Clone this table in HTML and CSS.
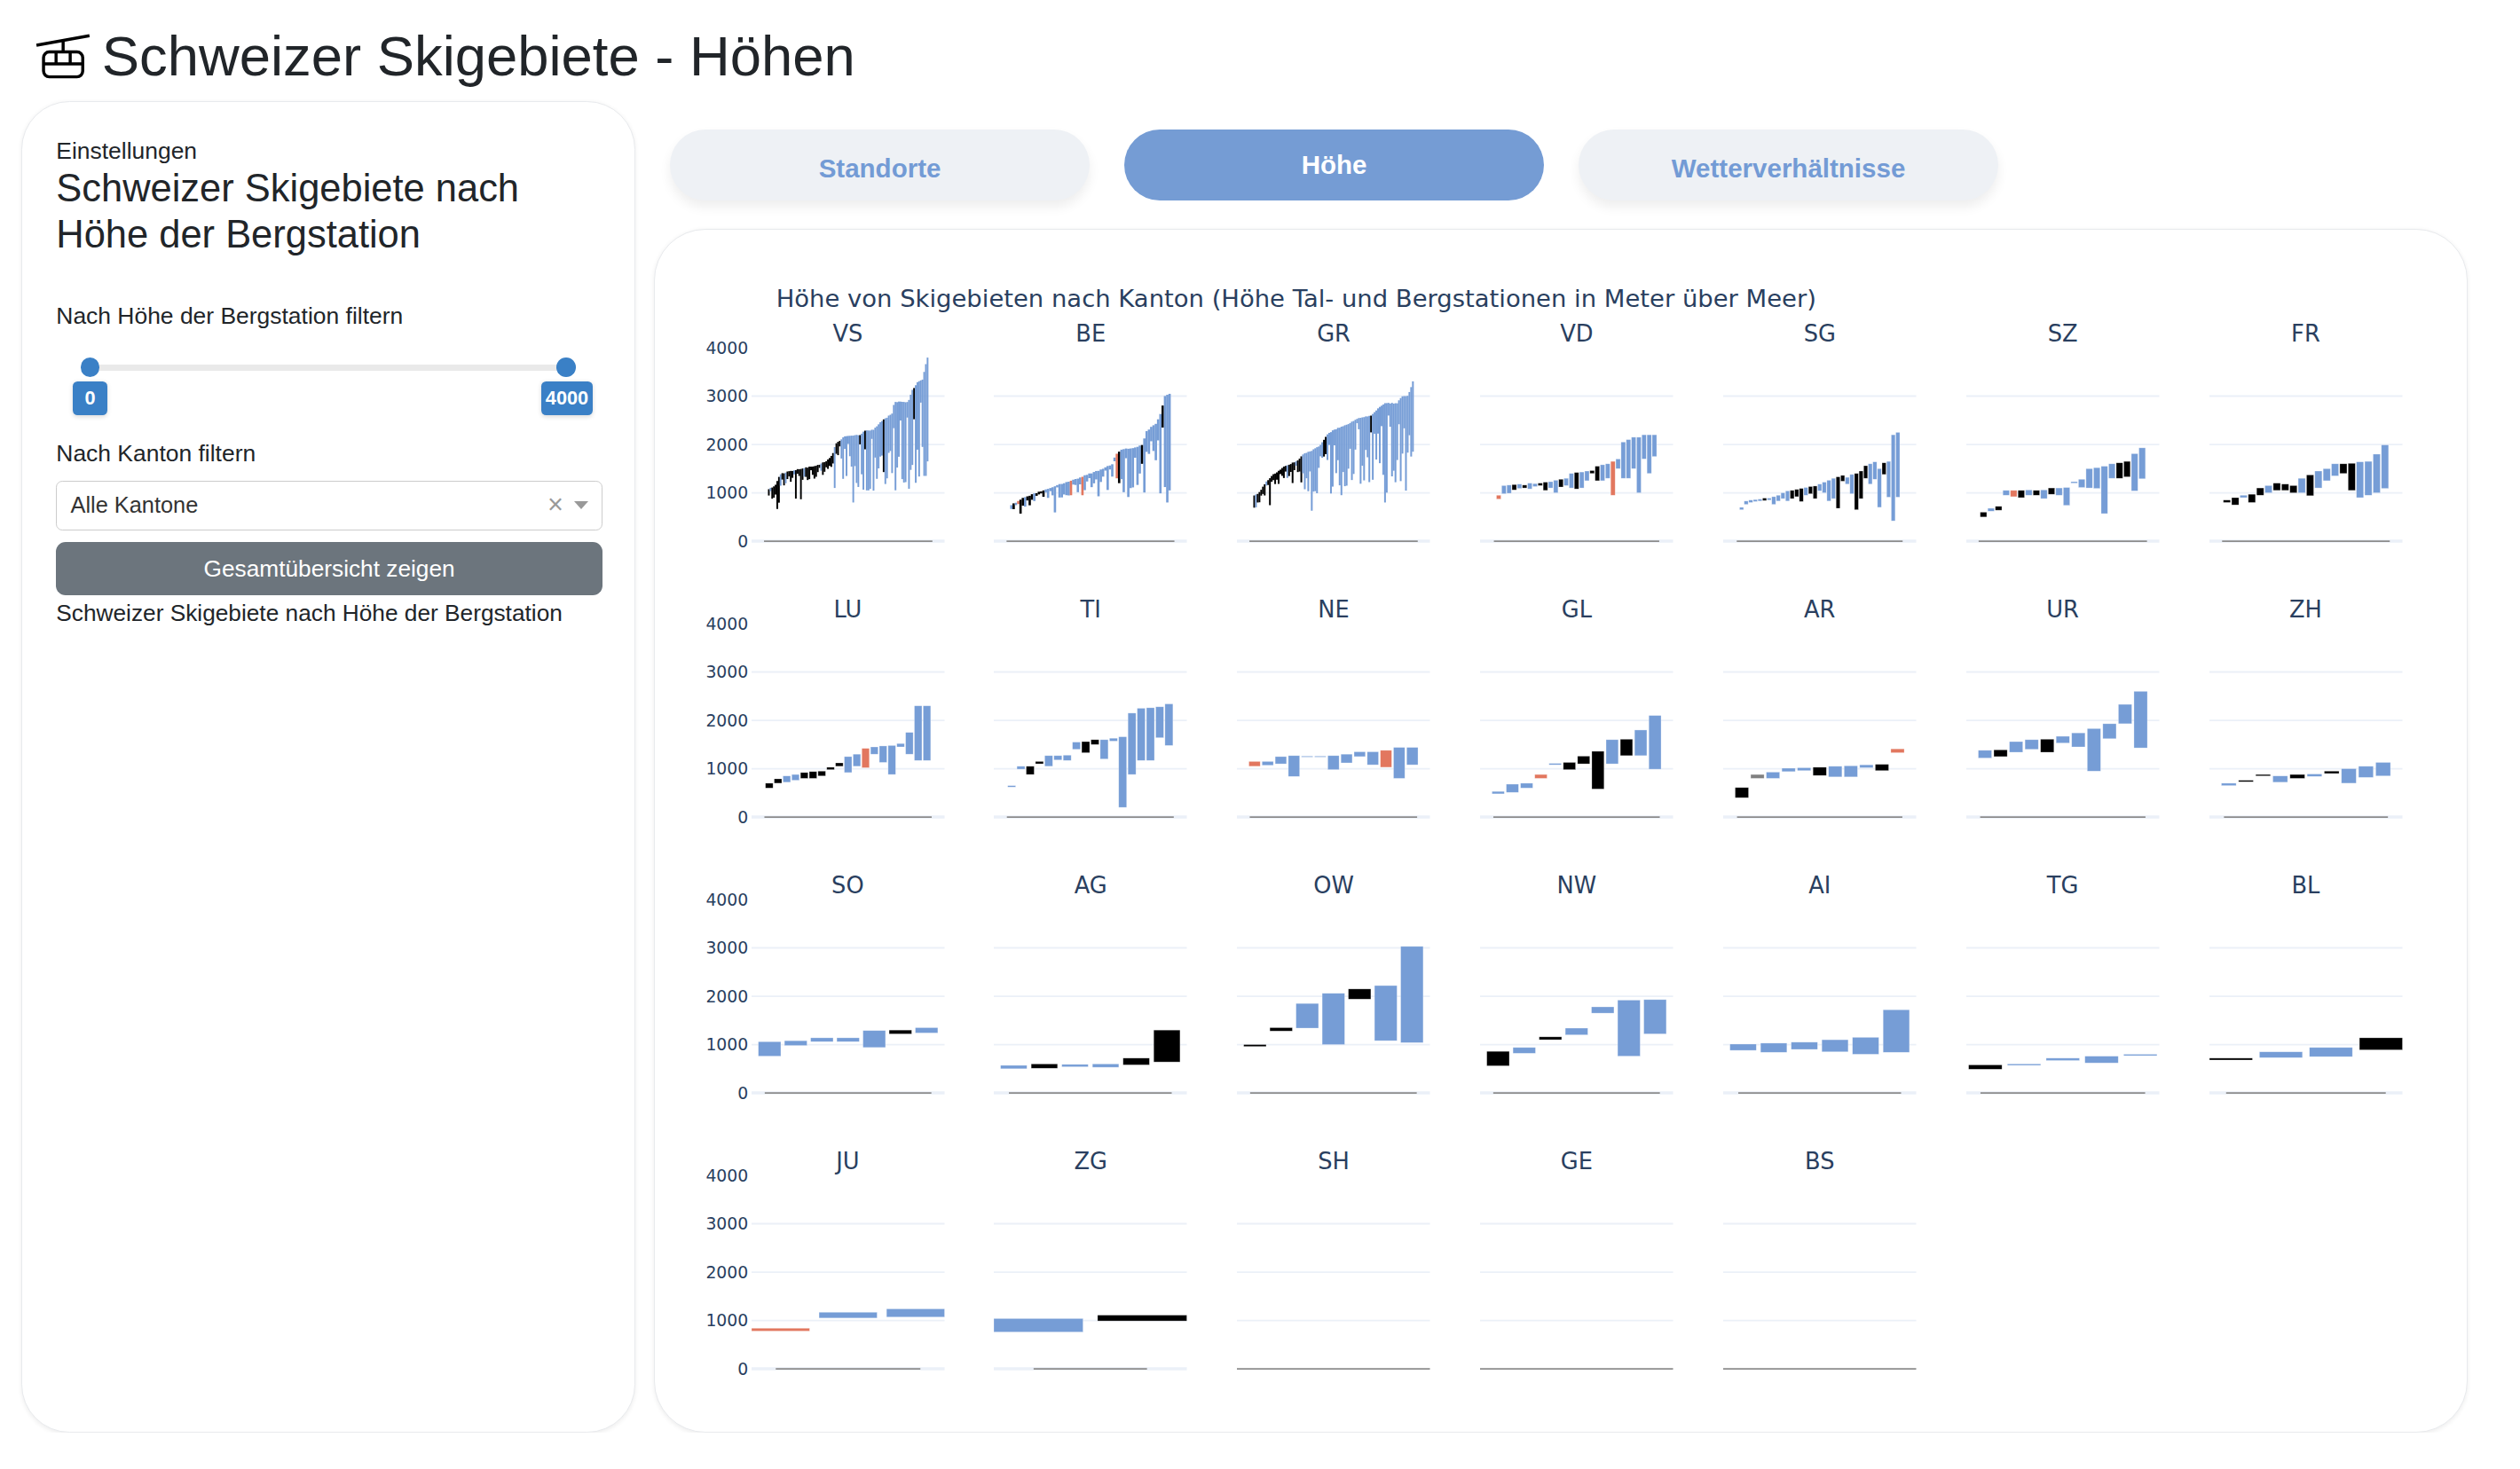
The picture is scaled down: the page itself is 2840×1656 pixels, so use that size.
FILE: index.html
```html
<!DOCTYPE html>
<html lang="de">
<head>
<meta charset="utf-8">
<title>Schweizer Skigebiete - Höhen</title>
<link rel="stylesheet" href="styles.css">
</head>
<body>
<header class="page-header">
  <svg class="logo" width="34" height="29" viewBox="0 0 34 29" aria-hidden="true">
    <g fill="none" stroke="#000" stroke-width="1.9">
      <line x1="0.6" y1="7.7" x2="33.6" y2="1.8"/>
      <line x1="17.2" y1="4.5" x2="17.2" y2="11.9"/>
      <rect x="5" y="11.9" width="24.4" height="15.5" rx="3.6"/>
      <line x1="5" y1="19.3" x2="29.4" y2="19.3"/>
      <line x1="12.8" y1="11.9" x2="12.8" y2="19.3"/>
      <line x1="21.6" y1="11.9" x2="21.6" y2="19.3"/>
    </g>
  </svg>
  <h1>Schweizer Skigebiete - Höhen</h1>
</header>
<main class="layout">
  <aside class="card settings">
    <div class="eyebrow">Einstellungen</div>
    <h2>Schweizer Skigebiete nach Höhe der Bergstation</h2>
    <div class="field-label first">Nach Höhe der Bergstation filtern</div>
    <div class="range">
      <div class="track"></div>
      <span class="handle h-min"></span>
      <span class="handle h-max"></span>
      <span class="tip t-min">0</span>
      <span class="tip t-max">4000</span>
    </div>
    <div class="field-label">Nach Kanton filtern</div>
    <div class="select">
      <span class="select-value">Alle Kantone</span>
      <span class="select-clear">×</span>
      <span class="select-caret"></span>
    </div>
    <button class="btn-overview" type="button">Gesamtübersicht zeigen</button>
    <p class="caption">Schweizer Skigebiete nach Höhe der Bergstation</p>
  </aside>
  <section class="content">
    <nav class="tabs">
      <button class="tab" type="button">Standorte</button>
      <button class="tab active" type="button">Höhe</button>
      <button class="tab" type="button">Wetterverhältnisse</button>
    </nav>
    <div class="card chart">
      <div class="fig-title">Höhe von Skigebieten nach Kanton (Höhe Tal- und Bergstationen in Meter über Meer)</div>
      <div id="fig" class="fig"></div>
    </div>
  </section>
</main>
<script src="script.js"></script>
</body>
</html>
```

FILE: styles.css
```css
html { zoom: 1.81122; }
* { box-sizing: border-box; }
body {
  margin: 0;
  background: #fff;
  font-family: "Liberation Sans", Arial, sans-serif;
  color: #212529;
}
.page-header {
  display: flex;
  align-items: center;
  gap: 7.4px;
  height: 54.8px;
  padding: 14.8px 0 0 22px;
}
.logo { display: block; flex: none; }
.page-header h1 {
  margin: 0;
  font-size: 35px;
  line-height: 40px;
  font-weight: 400;
}
.layout {
  display: flex;
  align-items: flex-start;
  gap: 11.6px;
  padding: 8.2px 0 0 13.4px;
}
.card {
  background: #fff;
  border: 1px solid #e8eaed;
  border-radius: 30px;
  box-shadow: 0 1px 3px rgba(0, 0, 0, 0.07);
}
.settings {
  flex: none;
  width: 382px;
  height: 828.7px;
  padding: 22px 20px 21px 21px;
  font-size: 14.6px;
  line-height: 17px;
}
.eyebrow { height: 17px; }
.settings h2 {
  margin: 0;
  font-size: 24px;
  line-height: 29px;
  font-weight: 400;
}
.field-label { height: 17px; }
.field-label.first { margin-top: 27.5px; }
.range {
  position: relative;
  height: 69px;
  padding-top: 21.7px;
}
.track {
  margin-left: 20.6px;
  width: 297px;
  height: 4px;
  border-radius: 2px;
  background: #e9e9e9;
}
.handle {
  position: absolute;
  top: 17.7px;
  width: 12px;
  height: 12px;
  border-radius: 50%;
  background: #3a80c6;
}
.h-min { left: 15.1px; }
.h-max { left: 311.1px; }
.tip {
  position: absolute;
  top: 32.5px;
  height: 20.7px;
  border-radius: 3px;
  background: #3a80c6;
  color: #fff;
  font-size: 12px;
  font-weight: 700;
  line-height: 20.7px;
  text-align: center;
  box-shadow: 0 1px 3px rgba(0, 0, 0, 0.15);
}
.t-min { left: 10.4px; width: 21.4px; }
.t-max { left: 301.6px; width: 32.5px; }
.select {
  display: flex;
  align-items: center;
  margin-top: 8px;
  height: 31px;
  padding: 0 8.4px;
  border: 1px solid #ccc;
  border-radius: 4px;
  font-size: 14px;
  color: #333;
}
.select-value { flex: 1; }
.select-clear {
  width: 17px;
  text-align: center;
  font-size: 17px;
  color: #999;
}
.select-caret {
  margin-left: 3px;
  width: 0;
  height: 0;
  border-left: 4.5px solid transparent;
  border-right: 4.5px solid transparent;
  border-top: 5px solid #999;
}
.btn-overview {
  display: block;
  width: 100%;
  height: 33px;
  margin-top: 7.5px;
  border: 0;
  border-radius: 6px;
  background: #6c757d;
  color: #fff;
  font-family: inherit;
  font-size: 14.5px;
}
.caption {
  margin: 2.5px 0 0;
  font-size: 14.5px;
  line-height: 17px;
}
.content {
  flex: none;
  width: 1128.4px;
}
.tabs {
  display: flex;
  gap: 21.2px;
  padding: 17.6px 0 0 9.7px;
}
.tab {
  width: 261.5px;
  height: 44.2px;
  padding: 4.6px 0 0;
  border: 0;
  border-radius: 22.1px;
  background: #eef1f5;
  color: #739bd5;
  font-family: "Liberation Sans", Arial, sans-serif;
  font-size: 16.3px;
  font-weight: 700;
  box-shadow: 0 4px 7px rgba(0, 0, 0, 0.07);
}
.tab.active {
  padding-top: 0;
  background: #759cd4;
  color: #fff;
  box-shadow: none;
}
.chart {
  margin-top: 17.8px;
  height: 749.1px;
  padding-top: 34px;
  border-radius: 32px;
}
.fig-title {
  padding-left: 75.4px;
  font-family: "DejaVu Sans", Verdana, sans-serif;
  font-size: 15.15px;
  line-height: 18px;
  color: #2a3f5f;
}
.fig {
  display: flex;
  flex-direction: column;
  row-gap: 31.3px;
  margin-top: 1.5px;
  padding-left: 11.9px;
  font-family: "DejaVu Sans", Verdana, sans-serif;
  color: #2a3f5f;
}
.fig-row { display: flex; }
.yaxis {
  flex: none;
  width: 48px;
  padding-top: 20px;
}
.cells {
  display: grid;
  grid-template-columns: repeat(7, 120.1px);
  column-gap: 31.1px;
}
.cell-title {
  height: 20px;
  padding-top: 2px;
  line-height: 18px;
  font-size: 14.2px;
  text-align: center;
}
svg.plot, svg.yax { display: block; overflow: visible; }
.tick { font-family: "DejaVu Sans", Verdana, sans-serif; font-size: 10.4px; fill: #2a3f5f; }
.grid { stroke: #ebf0f8; stroke-width: 1; }
.zero-band { stroke: #ebf0f8; stroke-width: 2; }
.zero { stroke: #8c8c8c; stroke-width: 0.9; }
.bar { stroke: #fff; stroke-opacity: 0.45; stroke-width: 0.35; }
.bar.thin { stroke: none; }
```

FILE: script.js
```js
(function () {
  var NS = 'http://www.w3.org/2000/svg';
  var COLORS = { b: '#769dd6', k: '#000000', r: '#e2775f', g: '#808080' };
  var W = 120.1, H = 120.4, YMAX = 4000;

  function rng(seed) {
    var s = seed >>> 0;
    return function () { s = (Math.imul(s, 1664525) + 1013904223) >>> 0; return s / 4294967296; };
  }
  function interp(keys, t) {
    for (var i = 1; i < keys.length; i++) {
      if (t <= keys[i][0]) {
        var a = keys[i - 1], b = keys[i];
        return a[1] + (b[1] - a[1]) * (t - a[0]) / (b[0] - a[0]);
      }
    }
    return keys[keys.length - 1][1];
  }
  function dense(o) {
    var r = rng(o.seed), out = [];
    for (var i = 0; i < o.n; i++) {
      var t = i / (o.n - 1);
      var top = interp(o.keys, t) + (r() - 0.5) * 20;
      var bottom, c;
      if (t < o.split) {
        c = r() < o.early ? 'k' : 'b';
        bottom = top - (o.min + r() * o.span);
        if (r() < 0.06) bottom -= 350;
      } else {
        c = r() < o.late ? 'k' : 'b';
        var u = Math.pow(r(), o.pw);
        bottom = top - 60 - u * Math.max(0, top - o.base - 60);
      }
      out.push([Math.round(bottom), Math.round(top), c]);
    }
    (o.fix || []).forEach(function (f) {
      var d = out[f[0]];
      if (f[1] != null) d[0] = f[1];
      if (f[2]) d[2] = f[2];
    });
    return out;
  }

  var DATA = {
    VS: dense({ n: 95, seed: 11, split: 0.45, early: 0.75, min: 50, span: 230, late: 0.05, base: 1000, pw: 0.6,
      keys: [[0,1080],[0.04,1150],[0.07,1380],[0.12,1440],[0.2,1500],[0.3,1560],[0.36,1650],[0.4,1780],[0.42,2000],[0.46,2120],[0.48,2180],[0.58,2200],[0.6,2280],[0.66,2300],[0.7,2450],[0.78,2650],[0.79,2880],[0.88,2880],[0.9,3100],[0.94,3300],[0.97,3350],[0.985,3600],[1,3800]],
      fix: [[3,900],[16,880],[39,1100,'b'],[50,800],[57,1900,'k'],[58,1050],[59,1050],[92,1350],[93,1350],[94,1650]] }),
    BE: dense({ n: 70, seed: 5, split: 0.3, early: 0.45, min: 40, span: 160, late: 0.06, base: 900, pw: 1,
      keys: [[0,750],[0.08,900],[0.16,1000],[0.24,1100],[0.33,1200],[0.42,1300],[0.5,1400],[0.58,1500],[0.64,1600],[0.66,1800],[0.7,1900],[0.8,1950],[0.83,2000],[0.85,2250],[0.88,2350],[0.92,2450],[0.95,2700],[0.97,3000],[1,3050]],
      fix: [[3,null,'r'],[4,570],[10,830],[26,950,'r'],[31,950,'r'],[46,1300,'r'],[47,1200,'k'],[57,1600,'k'],[66,2350,'k'],[68,800],[69,1050]] }),
    GR: dense({ n: 92, seed: 3, split: 0.3, early: 0.8, min: 60, span: 220, late: 0.03, base: 950, pw: 0.8,
      keys: [[0,950],[0.03,1000],[0.07,1200],[0.11,1350],[0.15,1450],[0.19,1550],[0.27,1650],[0.31,1800],[0.38,1900],[0.42,2000],[0.46,2200],[0.5,2300],[0.58,2400],[0.66,2550],[0.74,2600],[0.78,2750],[0.82,2850],[0.9,2850],[0.93,3000],[0.97,3000],[1,3300]],
      fix: [[1,700],[2,800],[33,630],[40,1750,'k'],[41,1800,'k'],[67,2250,'k'],[75,800],[90,1750],[91,1850]] }),
    VD: [[870,950,'r'],[980,1150,'b'],[990,1160,'b'],[1060,1170,'k'],[1090,1180,'b'],[1100,1160,'k'],[1080,1200,'b'],[1130,1190,'b'],[1150,1200,'k'],[1050,1220,'k'],[1100,1230,'b'],[1000,1260,'b'],[1120,1280,'k'],[1150,1300,'b'],[1100,1400,'b'],[1080,1420,'k'],[1100,1430,'b'],[1250,1450,'b'],[1400,1460,'k'],[1250,1550,'k'],[1250,1580,'b'],[1300,1600,'b'],[950,1650,'r'],[1500,1700,'b'],[1300,2050,'b'],[1300,2100,'b'],[1500,2150,'b'],[1000,2150,'b'],[1700,2200,'b'],[1400,2200,'b'],[1750,2200,'b']],
    SG: [[650,700,'b'],[760,830,'b'],[800,850,'b'],[820,860,'b'],[830,870,'b'],[840,890,'k'],[850,890,'b'],[760,920,'b'],[830,950,'b'],[880,1000,'b'],[830,1040,'b'],[880,1050,'k'],[920,1070,'k'],[820,1090,'k'],[950,1110,'b'],[980,1130,'k'],[880,1140,'k'],[1040,1180,'b'],[1000,1220,'b'],[830,1260,'b'],[880,1300,'b'],[680,1330,'k'],[1240,1360,'k'],[1180,1320,'b'],[980,1380,'b'],[650,1400,'k'],[880,1450,'k'],[1300,1560,'k'],[1180,1600,'b'],[1280,1640,'b'],[700,1500,'b'],[1380,1620,'k'],[910,1650,'b'],[420,2200,'b'],[910,2250,'b']],
    SZ: [[500,600,'k'],[620,680,'b'],[640,720,'k'],[950,1050,'b'],[920,1050,'r'],[900,1050,'k'],[950,1060,'b'],[950,1050,'k'],[880,1060,'b'],[970,1100,'k'],[950,1100,'b'],[740,1110,'b'],[1200,1230,'b'],[1110,1280,'b'],[1100,1500,'b'],[1090,1520,'b'],[570,1550,'b'],[1300,1600,'b'],[1300,1620,'k'],[1330,1650,'k'],[1040,1810,'b'],[1290,1930,'b']],
    FR: [[800,850,'k'],[750,900,'k'],[900,950,'b'],[800,970,'k'],[950,1100,'k'],[1000,1150,'b'],[1050,1200,'k'],[1050,1180,'k'],[1000,1150,'k'],[1000,1300,'b'],[940,1370,'k'],[1100,1450,'b'],[1250,1500,'b'],[1350,1600,'b'],[1400,1600,'k'],[1050,1610,'k'],[900,1640,'b'],[950,1650,'b'],[1000,1800,'b'],[1090,1990,'b']],
    LU: [[600,700,'k'],[700,790,'k'],[720,850,'b'],[760,880,'b'],[800,920,'k'],[800,940,'k'],[850,950,'k'],[980,1030,'k'],[1050,1120,'k'],[920,1250,'b'],[1050,1300,'b'],[1020,1420,'r'],[1300,1450,'b'],[1130,1470,'b'],[880,1480,'b'],[1450,1520,'b'],[1300,1750,'b'],[1170,2300,'b'],[1170,2300,'b']],
    TI: [[620,650,'b'],[990,1050,'b'],[880,1050,'k'],[1100,1150,'k'],[1050,1270,'b'],[1180,1270,'b'],[1170,1280,'b'],[1400,1550,'b'],[1330,1560,'k'],[1500,1600,'k'],[1200,1600,'b'],[1570,1630,'b'],[200,1660,'b'],[880,2150,'b'],[1170,2250,'b'],[1170,2260,'b'],[1640,2280,'b'],[1480,2340,'b']],
    NE: [[1050,1150,'r'],[1070,1150,'b'],[1100,1250,'b'],[840,1270,'b'],[1240,1260,'b'],[1240,1260,'b'],[980,1270,'b'],[1120,1300,'b'],[1250,1350,'b'],[1080,1350,'b'],[1030,1380,'r'],[800,1440,'b'],[1080,1440,'b']],
    GL: [[480,530,'b'],[510,680,'b'],[600,700,'b'],[800,880,'r'],[1080,1110,'b'],[980,1130,'k'],[1100,1260,'k'],[580,1360,'k'],[1100,1600,'b'],[1270,1610,'k'],[1270,1800,'b'],[990,2100,'b']],
    AR: [[400,610,'k'],[800,880,'g'],[800,930,'b'],[940,1010,'b'],[960,1020,'b'],[860,1030,'k'],[830,1050,'b'],[830,1060,'b'],[1020,1080,'b'],[960,1090,'k'],[1330,1410,'r']],
    UR: [[1220,1380,'b'],[1250,1390,'k'],[1340,1560,'b'],[1400,1600,'b'],[1340,1610,'k'],[1530,1670,'b'],[1450,1740,'b'],[950,1830,'b'],[1620,1930,'b'],[1930,2330,'b'],[1430,2600,'b']],
    ZH: [[650,700,'b'],[730,760,'k'],[850,880,'k'],[720,850,'b'],[800,880,'k'],[840,890,'b'],[900,950,'k'],[700,1000,'b'],[820,1050,'b'],[850,1130,'b']],
    SO: [[760,1060,'b'],[980,1080,'b'],[1060,1140,'b'],[1060,1140,'b'],[940,1290,'b'],[1220,1300,'k'],[1240,1350,'b']],
    AG: [[500,570,'b'],[510,600,'k'],[540,590,'b'],[530,600,'b'],[580,720,'k'],[640,1300,'k']],
    OW: [[960,1000,'k'],[1280,1350,'k'],[1340,1850,'b'],[1000,2060,'b'],[1940,2150,'k'],[1080,2220,'b'],[1040,3030,'b']],
    NW: [[560,860,'k'],[820,940,'b'],[1100,1160,'k'],[1200,1340,'b'],[1650,1780,'b'],[760,1920,'b'],[1220,1930,'b']],
    AI: [[880,1010,'b'],[840,1030,'b'],[900,1050,'b'],[850,1100,'b'],[800,1150,'b'],[840,1720,'b']],
    TG: [[490,580,'k'],[570,600,'b'],[670,720,'b'],[620,760,'b'],[770,800,'b']],
    BL: [[680,720,'k'],[730,850,'b'],[750,940,'b'],[890,1140,'k']],
    JU: [[780,840,'r'],[1050,1170,'b'],[1070,1240,'b']],
    ZG: [[760,1040,'b'],[990,1110,'k']],
    SH: [], GE: [], BS: []
  };

  var ROWS = [
    ['VS','BE','GR','VD','SG','SZ','FR'],
    ['LU','TI','NE','GL','AR','UR','ZH'],
    ['SO','AG','OW','NW','AI','TG','BL'],
    ['JU','ZG','SH','GE','BS']
  ];

  function edge(n) {
    return n > 25 ? 0.085 : n >= 15 ? 0.072 : n >= 8 ? 0.062 : n >= 6 ? 0.035 : n === 5 ? 0.012 : 0;
  }
  function el(name, attrs) {
    var e = document.createElementNS(NS, name);
    for (var k in attrs) e.setAttribute(k, attrs[k]);
    return e;
  }
  function ypos(m) { return H * (1 - m / YMAX); }

  function plot(bars) {
    var svg = el('svg', { width: W, height: H, viewBox: '0 0 ' + W + ' ' + H, 'class': 'plot' });
    [1000, 2000, 3000].forEach(function (m) {
      svg.appendChild(el('line', { x1: 0, x2: W, y1: ypos(m), y2: ypos(m), 'class': 'grid' }));
    });
    var n = bars.length;
    if (n) {
      svg.appendChild(el('line', { x1: 0, x2: W, y1: H, y2: H, 'class': 'zero-band' }));
      var e = edge(n), s = W * (1 - 2 * e) / (n - 1 + 0.86);
      var isDense = n > 50;
      var bw = isDense ? s * 1.02 : s * 0.86, x0 = W * e;
      var c0 = x0 + bw / 2, c1 = x0 + (n - 1) * s + bw / 2;
      svg.appendChild(el('line', { x1: Math.max(0, c0 - 3), x2: Math.min(W, c1 + 3), y1: H, y2: H, 'class': 'zero' }));
      bars.forEach(function (b, i) {
        var y1 = ypos(b[1]), y2 = ypos(b[0]);
        svg.appendChild(el('rect', { x: x0 + i * s, y: y1, width: bw, height: Math.max(0.6, y2 - y1), fill: COLORS[b[2]], 'class': isDense ? 'bar thin' : 'bar' }));
      });
    } else {
      svg.appendChild(el('line', { x1: 0, x2: W, y1: H, y2: H, 'class': 'zero' }));
    }
    return svg;
  }

  function yaxis() {
    var svg = el('svg', { width: 48, height: H, viewBox: '0 0 48 ' + H, 'class': 'yax' });
    [4000, 3000, 2000, 1000, 0].forEach(function (m) {
      var t = el('text', { x: 46, y: ypos(m), dy: '0.36em', 'text-anchor': 'end', 'class': 'tick' });
      t.textContent = String(m);
      svg.appendChild(t);
    });
    return svg;
  }

  var fig = document.getElementById('fig');
  ROWS.forEach(function (row) {
    var r = document.createElement('div');
    r.className = 'fig-row';
    var ya = document.createElement('div');
    ya.className = 'yaxis';
    ya.appendChild(yaxis());
    r.appendChild(ya);
    var cells = document.createElement('div');
    cells.className = 'cells';
    row.forEach(function (name) {
      var c = document.createElement('div');
      c.className = 'cell';
      var t = document.createElement('div');
      t.className = 'cell-title';
      t.textContent = name;
      c.appendChild(t);
      c.appendChild(plot(DATA[name]));
      cells.appendChild(c);
    });
    r.appendChild(cells);
    fig.appendChild(r);
  });
})();
```
